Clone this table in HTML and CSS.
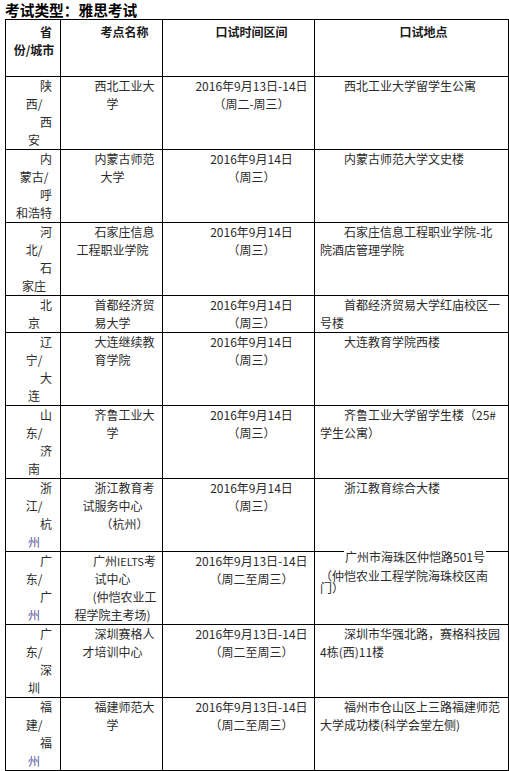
FILE: index.html
```html
<!DOCTYPE html>
<html lang="zh-CN">
<head>
<meta charset="utf-8">
<title>考试类型：雅思考试</title>
<link rel="stylesheet" href="styles.css">
</head>
<body>
<div class="page">
<h2 class="title">考试类型：雅思考试</h2>
<table class="exam">
<colgroup><col class="c1"><col class="c2"><col class="c3"><col class="c4"></colgroup>
<thead>
<tr>
<th class="city"><p>省份/城市</p></th>
<th class="name"><p>考点名称</p></th>
<th class="time"><p>口试时间区间</p></th>
<th class="place"><p>口试地点</p></th>
</tr>
</thead>
<tbody>
<tr>
<td class="city"><p>陕西/</p><p>西安</p></td>
<td class="name"><p>西北工业大学</p></td>
<td class="time"><p>2016年9月13日-14日</p><p>（周二-周三）</p></td>
<td class="place"><p>西北工业大学留学生公寓</p></td>
</tr>
<tr>
<td class="city"><p>内蒙古/</p><p>呼和浩特</p></td>
<td class="name"><p>内蒙古师范大学</p></td>
<td class="time"><p>2016年9月14日</p><p>（周三）</p></td>
<td class="place"><p>内蒙古师范大学文史楼</p></td>
</tr>
<tr>
<td class="city"><p>河北/</p><p>石家庄</p></td>
<td class="name"><p>石家庄信息工程职业学院</p></td>
<td class="time"><p>2016年9月14日</p><p>（周三）</p></td>
<td class="place"><p>石家庄信息工程职业学院-北院酒店管理学院</p></td>
</tr>
<tr>
<td class="city"><p>北京</p></td>
<td class="name"><p>首都经济贸易大学</p></td>
<td class="time"><p>2016年9月14日</p><p>（周三）</p></td>
<td class="place"><p>首都经济贸易大学红庙校区一号楼</p></td>
</tr>
<tr>
<td class="city"><p>辽宁/</p><p>大连</p></td>
<td class="name"><p>大连继续教育学院</p></td>
<td class="time"><p>2016年9月14日</p><p>（周三）</p></td>
<td class="place"><p>大连教育学院西楼</p></td>
</tr>
<tr>
<td class="city"><p>山东/</p><p>济南</p></td>
<td class="name"><p>齐鲁工业大学</p></td>
<td class="time"><p>2016年9月14日</p><p>（周三）</p></td>
<td class="place"><p>齐鲁工业大学留学生楼（25#学生公寓）</p></td>
</tr>
<tr>
<td class="city"><p>浙江/</p><p>杭<span class="blue">州</span></p></td>
<td class="name"><p>浙江教育考试服务中心</p><p>（杭州）</p></td>
<td class="time"><p>2016年9月14日</p><p>（周三）</p></td>
<td class="place"><p>浙江教育综合大楼</p></td>
</tr>
<tr>
<td class="city"><p>广东/</p><p>广<span class="blue">州</span></p></td>
<td class="name"><p>广州<span class="latin">IELTS</span>考试中心</p><p>(仲恺农业工程学院主考场)</p></td>
<td class="time"><p>2016年9月13日-14日</p><p>（周二至周三）</p></td>
<td class="place gz"><p class="gz-a"><span class="mask">广州市海珠区仲恺路501号</span></p><p class="gz-b">（仲恺农业工程学院海珠校区南门）</p></td>
</tr>
<tr>
<td class="city"><p>广东/</p><p>深圳</p></td>
<td class="name"><p>深圳赛格人才培训中心</p></td>
<td class="time"><p>2016年9月13日-14日</p><p>（周二至周三）</p></td>
<td class="place"><p>深圳市华强北路，赛格科技园4栋(西)11楼</p></td>
</tr>
<tr>
<td class="city"><p>福建/</p><p>福<span class="blue">州</span></p></td>
<td class="name"><p>福建师范大学</p></td>
<td class="time"><p>2016年9月13日-14日</p><p>（周二至周三）</p></td>
<td class="place"><p>福州市仓山区上三路福建师范大学成功楼(科学会堂左侧)</p></td>
</tr>
</tbody>
</table>
<h2 class="next">考试类型：雅思生活技能类考试（口试）</h2>
</div>
</body>
</html>
```
FILE: styles.css
```css
html, body {
  margin: 0;
  padding: 0;
  background: #fff;
}

body {
  font-family: "Noto Sans CJK SC", "Microsoft YaHei", sans-serif;
  font-size: 12px;
  color: #2b2b2b;
}

.page {
  padding-left: 5px;
}

.title {
  margin: 0;
  font-size: 14.7px;
  font-weight: bold;
  line-height: 19px;
  color: #000;
}

.exam {
  border-collapse: collapse;
  table-layout: fixed;
  width: 503px;
}

.exam col.c1 { width: 55px; }
.exam col.c2 { width: 102px; }
.exam col.c3 { width: 152px; }
.exam col.c4 { width: 194px; }

.exam th,
.exam td {
  border: 1px solid #000;
  padding: 0 5px 0 7px;
  vertical-align: top;
  line-height: 18px;
  font-weight: normal;
}

.exam p {
  margin: 0;
  text-indent: 2em;
}

.exam th {
  height: 53px;
  padding-top: 3px;
  font-weight: bold;
  color: #1a1a1a;
  text-align: center;
}

.city,
.name,
.time {
  text-align: center;
}

.time p {
  white-space: nowrap;
}

.latin {
  font-size: 11px;
}

.exam td.place {
  text-align: left;
  padding-left: 5px;
}

.exam th.place {
  text-align: center;
  padding-left: 5px;
}

.blue {
  color: #55559c;
}

.gz-a {
  line-height: 18px;
}

.mask {
  position: relative;
  top: -4px;
  background: #fff;
  padding: 2px 1px;
}

.exam p.gz-b {
  line-height: 12px;
  text-indent: 0;
}

.next {
  margin: 0;
  font-size: 14.7px;
  font-weight: bold;
  line-height: 15px;
  color: #000;
}
```
